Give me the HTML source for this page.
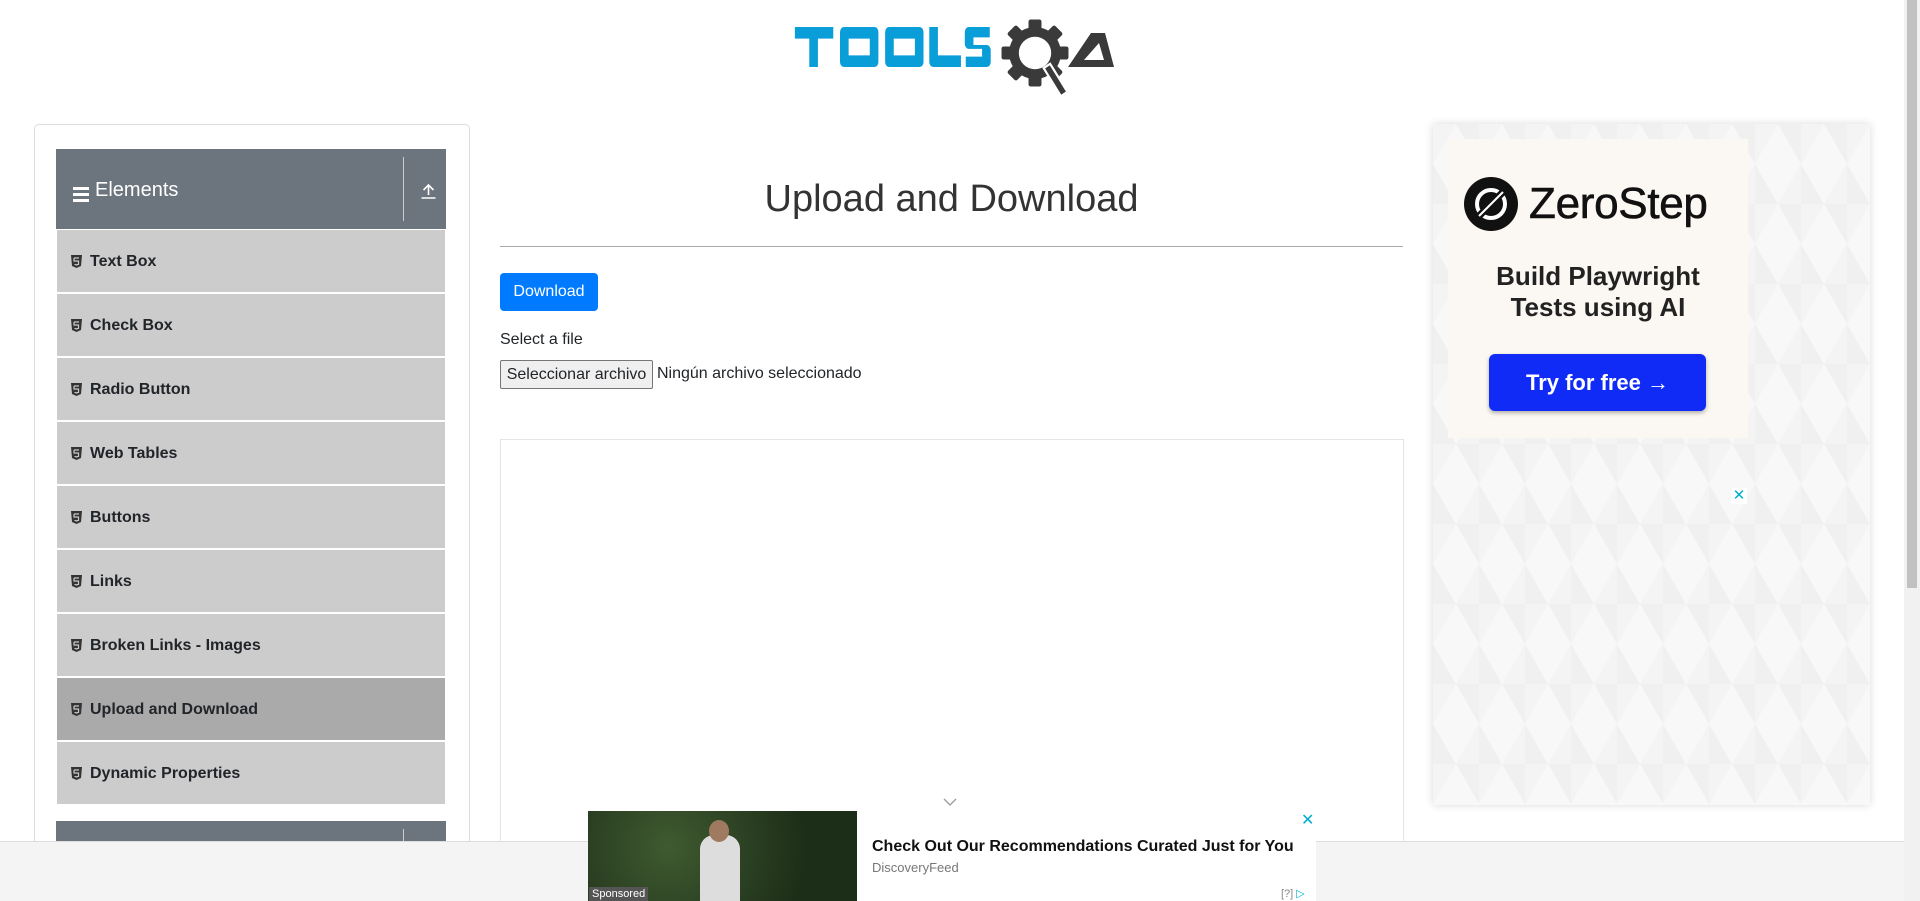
<!DOCTYPE html>
<html><head><meta charset="utf-8">
<style>
*{box-sizing:border-box;margin:0;padding:0}
html,body{width:1920px;height:901px;overflow:hidden;background:#fff;font-family:"Liberation Sans",Arial,sans-serif;color:#212529}
.abs{position:absolute}
.card{left:34px;top:124px;width:436px;height:777px;border:1px solid #ddd;border-radius:5px;background:#fff}
.hdr{left:56px;width:390px;height:80px;background:#6c757d;color:#fff}
.hdr .t{position:absolute;left:39px;top:30px;font-size:20px}
.hdr .bar{position:absolute;left:17px;top:38px;width:16px}
.hdr .bar i{display:block;height:3px;background:#fff;margin-bottom:3px}
.hdr .div{position:absolute;left:347px;top:8px;width:1px;height:64px;background:#ccc}
.item{left:57px;width:388px;height:62px;background:#ccc;font-weight:bold;font-size:16px;color:#212529}
.item.act{background:#aaa}
.item span{position:absolute;left:33px;top:23px}
.item svg{position:absolute;left:14px;top:25px}
.h1{left:500px;width:903px;top:178px;text-align:center;font-size:38px;font-weight:300;color:#333}
</style></head><body>
<!-- logo -->
<svg class="abs" style="left:790px;top:0" width="340" height="100" viewBox="0 0 340 100">
<g fill="#0a9ed9" transform="translate(2,27) scale(0.96,1.29) translate(0,-27)">
<rect x="3" y="27" width="40" height="9"/><rect x="18" y="27" width="9" height="31"/>
<path fill-rule="evenodd" d="M50 31a4 4 0 0 1 4-4h32a4 4 0 0 1 4 4v23a4 4 0 0 1-4 4H54a4 4 0 0 1-4-4zM59 36v13h22V36z"/>
<path fill-rule="evenodd" d="M97 31a4 4 0 0 1 4-4h32a4 4 0 0 1 4 4v23a4 4 0 0 1-4 4h-32a4 4 0 0 1-4-4zM106 36v13h22V36z"/>
<path d="M143 27h9v22h24v9h-29a4 4 0 0 1-4-4z"/>
<path d="M184 27h22v8h-17v6h14a4 4 0 0 1 4 4v9a4 4 0 0 1-4 4h-22v-8h17v-6h-14a4 4 0 0 1-4-4v-9a4 4 0 0 1 4-4z"/>
</g>
<g fill="#3a3a3a" transform="translate(245,53) scale(1.08)">
<circle r="24"/>
<g>
<rect x="-6" y="-31" width="12" height="12" rx="2"/>
<rect x="-6" y="-31" width="12" height="12" rx="2" transform="rotate(45)"/>
<rect x="-6" y="-31" width="12" height="12" rx="2" transform="rotate(90)"/>
<rect x="-6" y="-31" width="12" height="12" rx="2" transform="rotate(135)"/>
<rect x="-6" y="-31" width="12" height="12" rx="2" transform="rotate(180)"/>
<rect x="-6" y="-31" width="12" height="12" rx="2" transform="rotate(225)"/>
<rect x="-6" y="-31" width="12" height="12" rx="2" transform="rotate(270)"/>
<rect x="-6" y="-31" width="12" height="12" rx="2" transform="rotate(315)"/>
</g>
<circle r="15" fill="#fff"/>
<path d="M8 14 L14 10 L30 36 L24 40z" stroke="#fff" stroke-width="2"/>
</g>
<path fill="#3a3a3a" fill-rule="evenodd" d="M278 67L301 33h14l9 34zM294 60h20l-5-17z"/>
</svg>

<div class="abs card"></div>
<div class="abs hdr" style="top:149px"><div class="bar"><i></i><i></i><i></i></div><div class="t">Elements</div><div class="div"></div>
<svg style="position:absolute;left:364px;top:33px" width="17" height="17" viewBox="0 0 17 17" fill="none" stroke="#fff" stroke-width="1.6"><path d="M8.5 13V3M3.5 8l5-5 5 5M1.5 16h14"/></svg></div>

<div id="items"></div>
<script>
var n=["Text Box","Check Box","Radio Button","Web Tables","Buttons","Links","Broken Links - Images","Upload and Download","Dynamic Properties"];
var h="";for(var i=0;i<n.length;i++){h+='<div class="abs item'+(i==7?' act':'')+'" style="top:'+(230+i*64)+'px"><svg width="11" height="13" viewBox="0 0 11 13"><path d="M0 0h11l-1 11-4.5 2-4.5-2z" fill="#333"/><path d="M3 3h5M3 3v3h4.5v3.3L5.5 10 3.5 9.3" fill="none" stroke="#ccc" stroke-width="1.2"/></svg><span>'+n[i]+'</span></div>';}
document.getElementById("items").innerHTML=h;
</script>
<div class="abs hdr" style="top:821px"><div class="div"></div></div>

<!-- main -->
<div class="abs h1">Upload and Download</div>
<div class="abs" style="left:500px;top:246px;width:903px;height:1px;background:#aaa"></div>
<div class="abs" style="left:500px;top:273px;width:98px;height:38px;background:#007bff;border-radius:4px;color:#fff;font-size:16px;line-height:38px;text-align:center">Download</div>
<div class="abs" style="left:500px;top:331px;font-size:16px">Select a file</div>
<div class="abs" style="left:500px;top:360px;width:153px;height:29px;background:#efefef;border:1px solid #767676;border-radius:2px;font-size:16px;line-height:27px;text-align:center">Seleccionar archivo</div>
<div class="abs" style="left:657px;top:365px;font-size:16px">Ningún archivo seleccionado</div>
<div class="abs" style="left:500px;top:439px;width:904px;height:420px;border:1px solid #e5e5e5"></div>

<!-- right ad -->
<div class="abs" style="left:1433px;top:124px;width:437px;height:681px;background-color:#f8f8f8;box-shadow:0 0 8px rgba(0,0,0,.15);background-image:linear-gradient(60deg,#f0f0f0 25%,transparent 25%,transparent 75%,#f0f0f0 75%),linear-gradient(-60deg,#f4f4f4 25%,transparent 25%,transparent 75%,#f4f4f4 75%);background-size:46px 80px"></div>
<div class="abs" style="left:1448px;top:139px;width:300px;height:299px;background:#fbf7f2"></div>
<svg class="abs" style="left:1464px;top:177px" width="54" height="54" viewBox="0 0 54 54"><circle cx="27" cy="27" r="27" fill="#111"/><circle cx="27" cy="27" r="14" fill="none" stroke="#fff" stroke-width="4"/><line x1="14" y1="40" x2="40" y2="14" stroke="#111" stroke-width="7"/><line x1="15" y1="39" x2="39" y2="15" stroke="#fff" stroke-width="2"/></svg>
<div class="abs" style="left:1529px;top:179px;font-size:44px;color:#111;letter-spacing:-0.3px;-webkit-text-stroke:0.6px #111">ZeroStep</div>
<div class="abs" style="left:1448px;width:300px;top:261px;text-align:center;font-size:26px;font-weight:bold;color:#222;line-height:31px">Build Playwright<br>Tests using AI</div>
<div class="abs" style="left:1489px;top:354px;width:217px;height:57px;background:#0f2bf5;border-radius:6px;box-shadow:0 2px 4px rgba(0,0,0,.3);color:#fff;font-weight:bold;font-size:22px;line-height:57px;text-align:center">Try for free →</div>
<div class="abs" style="left:1731px;top:488px;width:16px;height:16px;background:#fff;color:#00aecd;font-size:15px;line-height:16px;text-align:center">✕</div>

<!-- footer -->
<div class="abs" style="left:0;top:841px;width:1904px;height:60px;background:#f4f4f4;border-top:1px solid #ddd"></div>
<svg class="abs" style="left:943px;top:798px" width="14" height="8" viewBox="0 0 14 8"><path d="M1 1l6 6 6-6" fill="none" stroke="#999" stroke-width="1.3"/></svg>
<div class="abs" style="left:588px;top:811px;width:728px;height:90px;background:#fff"></div>
<div class="abs" style="left:588px;top:811px;width:269px;height:90px;background:radial-gradient(circle at 30% 40%,#3f5a30,#1d2e18 70%)"></div>
<div class="abs" style="left:700px;top:835px;width:40px;height:66px;background:#ddd;border-radius:14px 14px 0 0"></div>
<div class="abs" style="left:709px;top:820px;width:20px;height:22px;background:#a07a60;border-radius:50%"></div>
<div class="abs" style="left:589px;top:887px;background:#555;color:#fff;font-size:11px;padding:1px 3px">Sponsored</div>
<div class="abs" style="left:872px;top:838px;font-size:16px;font-weight:bold;color:#111">Check Out Our Recommendations Curated Just for You</div>
<div class="abs" style="left:872px;top:860px;font-size:13px;color:#777">DiscoveryFeed</div>
<div class="abs" style="left:1301px;top:810px;color:#00aecd;font-size:16px">✕</div>
<div class="abs" style="left:1281px;top:887px;color:#888;font-size:11px">[?] <span style="color:#00aecd">▷</span></div>

<!-- scrollbar -->
<div class="abs" style="left:1904px;top:0;width:16px;height:901px;background:#f1f1f1"></div>
<div class="abs" style="left:1907px;top:0;width:10px;height:588px;background:#c1c1c1"></div>
</body></html>
